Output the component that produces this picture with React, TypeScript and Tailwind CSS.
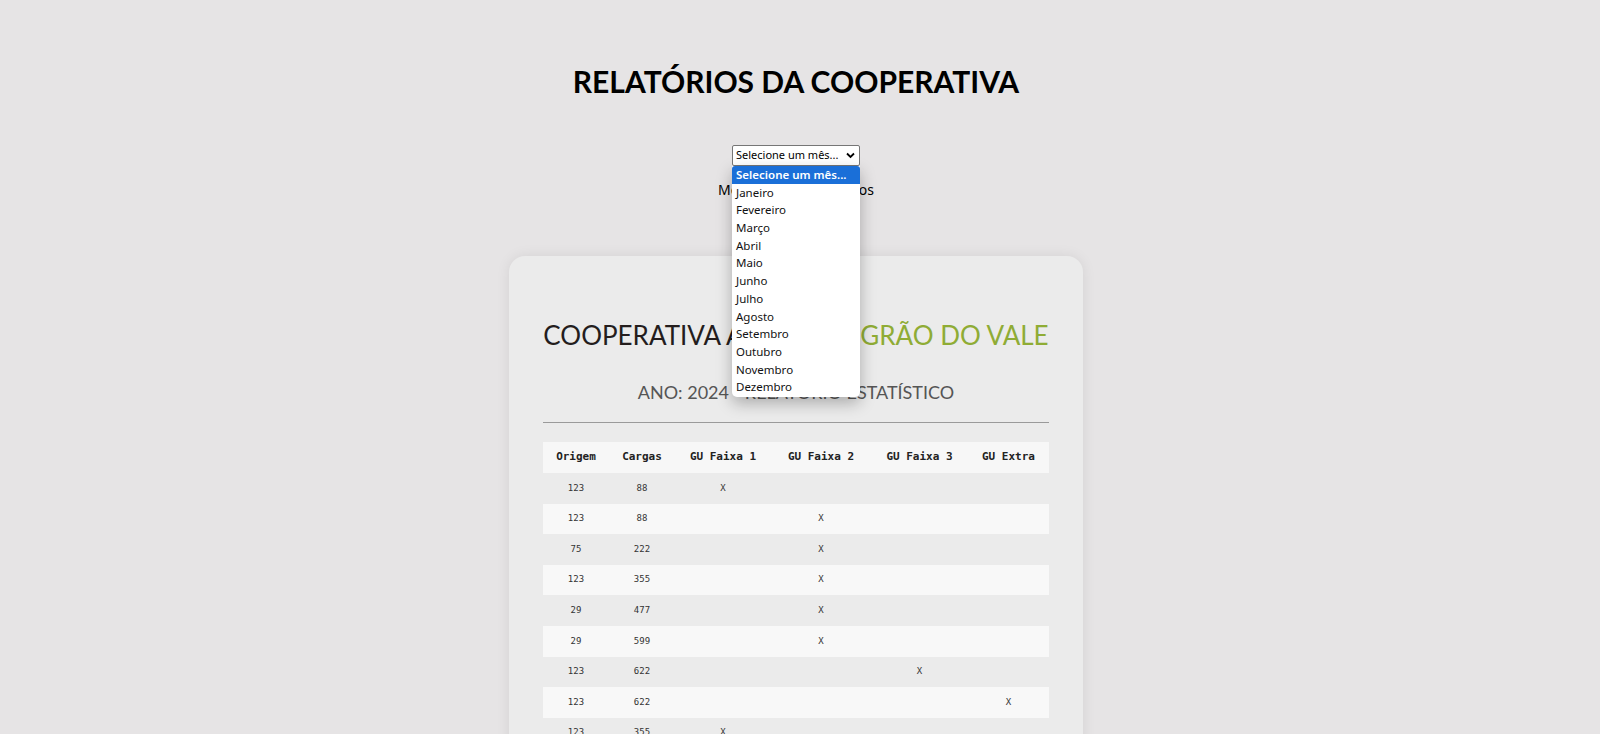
import React from "react";

const months = [
  "Selecione um mês...",
  "Janeiro",
  "Fevereiro",
  "Março",
  "Abril",
  "Maio",
  "Junho",
  "Julho",
  "Agosto",
  "Setembro",
  "Outubro",
  "Novembro",
  "Dezembro",
];

const rows: [string, string, number][] = [
  ["123", "88", 1],
  ["123", "88", 2],
  ["75", "222", 2],
  ["123", "355", 2],
  ["29", "477", 2],
  ["29", "599", 2],
  ["123", "622", 3],
  ["123", "622", 4],
  ["123", "355", 1],
  ["75", "222", 2],
];

export default function App() {
  return (
    <div className="min-h-screen w-full bg-[#e6e4e5] flex flex-col items-center pr-[8px] font-['Lato','Noto_Sans',sans-serif] overflow-hidden">
      <h1 className="mt-[61px] text-[30px] leading-[40px] font-bold text-black whitespace-nowrap">
        RELATÓRIOS DA COOPERATIVA
      </h1>

      <div className="relative mt-[44px] z-20">
        <div className="w-[128px] h-[21px] bg-white border border-[#767676] rounded-[2px] flex items-center justify-between pl-[3px] pr-[4px] font-['Noto_Sans',sans-serif] text-[11px] text-black whitespace-nowrap">
          <span>Selecione um mês...</span>
          <svg width="9" height="7" viewBox="0 0 9 7" className="shrink-0">
            <path d="M1 1.5 L4.5 5 L8 1.5" stroke="#000" strokeWidth="1.8" fill="none" />
          </svg>
        </div>
        <div className="absolute left-0 top-[21px] w-[128px] bg-white rounded-b-[5px] shadow-[0_6px_16px_rgba(0,0,0,0.28)] font-['Noto_Sans',sans-serif] text-[11.5px] text-[#111] overflow-hidden whitespace-nowrap">
          {months.map((m, i) => (
            <div
              key={m}
              className={
                i === 0
                  ? "h-[17.7px] leading-[17.7px] pl-[4px] bg-[#1a6fd8] text-white font-semibold rounded-t-[3px]"
                  : "h-[17.7px] leading-[17.7px] pl-[4px]"
              }
            >
              {m}
            </div>
          ))}
          <div className="h-[1px]" />
        </div>
      </div>

      <p className="mt-[16px] text-[14px] leading-[16px] text-black font-['Noto_Sans',sans-serif]">
        Mês selecionado: Todos
      </p>

      <div className="mt-[58px] w-[574px] bg-[#ebebeb] rounded-[16px] shadow-[0_0_14px_rgba(0,0,0,0.08)] px-[34px] pt-[61px] pb-[40px]">
        <h2 className="text-[26px] leading-[36px] text-center text-[#241d1d] whitespace-nowrap">
          COOPERATIVA AGRÍCOLA <span className="text-[#8fac35]">GRÃO DO VALE</span>
        </h2>
        <p className="mt-[27px] text-[18px] leading-[24px] text-center text-[#555]">
          ANO: 2024 - RELATÓRIO ESTATÍSTICO
        </p>
        <hr className="mt-[18px] border-0 border-t border-[#9a9a9a]" />
        <table className="mt-[19px] w-full table-fixed border-collapse font-['DejaVu_Sans_Mono',monospace]">
          <colgroup>
            <col className="w-[66px]" />
            <col className="w-[66px]" />
            <col className="w-[96px]" />
            <col className="w-[100px]" />
            <col className="w-[97px]" />
            <col className="w-[81px]" />
          </colgroup>
          <thead>
            <tr className="h-[31px] bg-[#f7f7f7]">
              {["Origem", "Cargas", "GU Faixa 1", "GU Faixa 2", "GU Faixa 3", "GU Extra"].map((h) => (
                <th key={h} className="text-[11px] font-bold text-[#222] text-center p-0">
                  {h}
                </th>
              ))}
            </tr>
          </thead>
          <tbody>
            {rows.map((r, i) => (
              <tr key={i} className={i % 2 === 1 ? "h-[30.6px] bg-[#f8f8f8]" : "h-[30.6px]"}>
                <td className="text-[9px] text-[#333] text-center p-0">{r[0]}</td>
                <td className="text-[9px] text-[#333] text-center p-0">{r[1]}</td>
                {[1, 2, 3, 4].map((c) => (
                  <td key={c} className="text-[9px] text-[#333] text-center p-0">
                    {r[2] === c ? "X" : ""}
                  </td>
                ))}
              </tr>
            ))}
          </tbody>
        </table>
      </div>
    </div>
  );
}
